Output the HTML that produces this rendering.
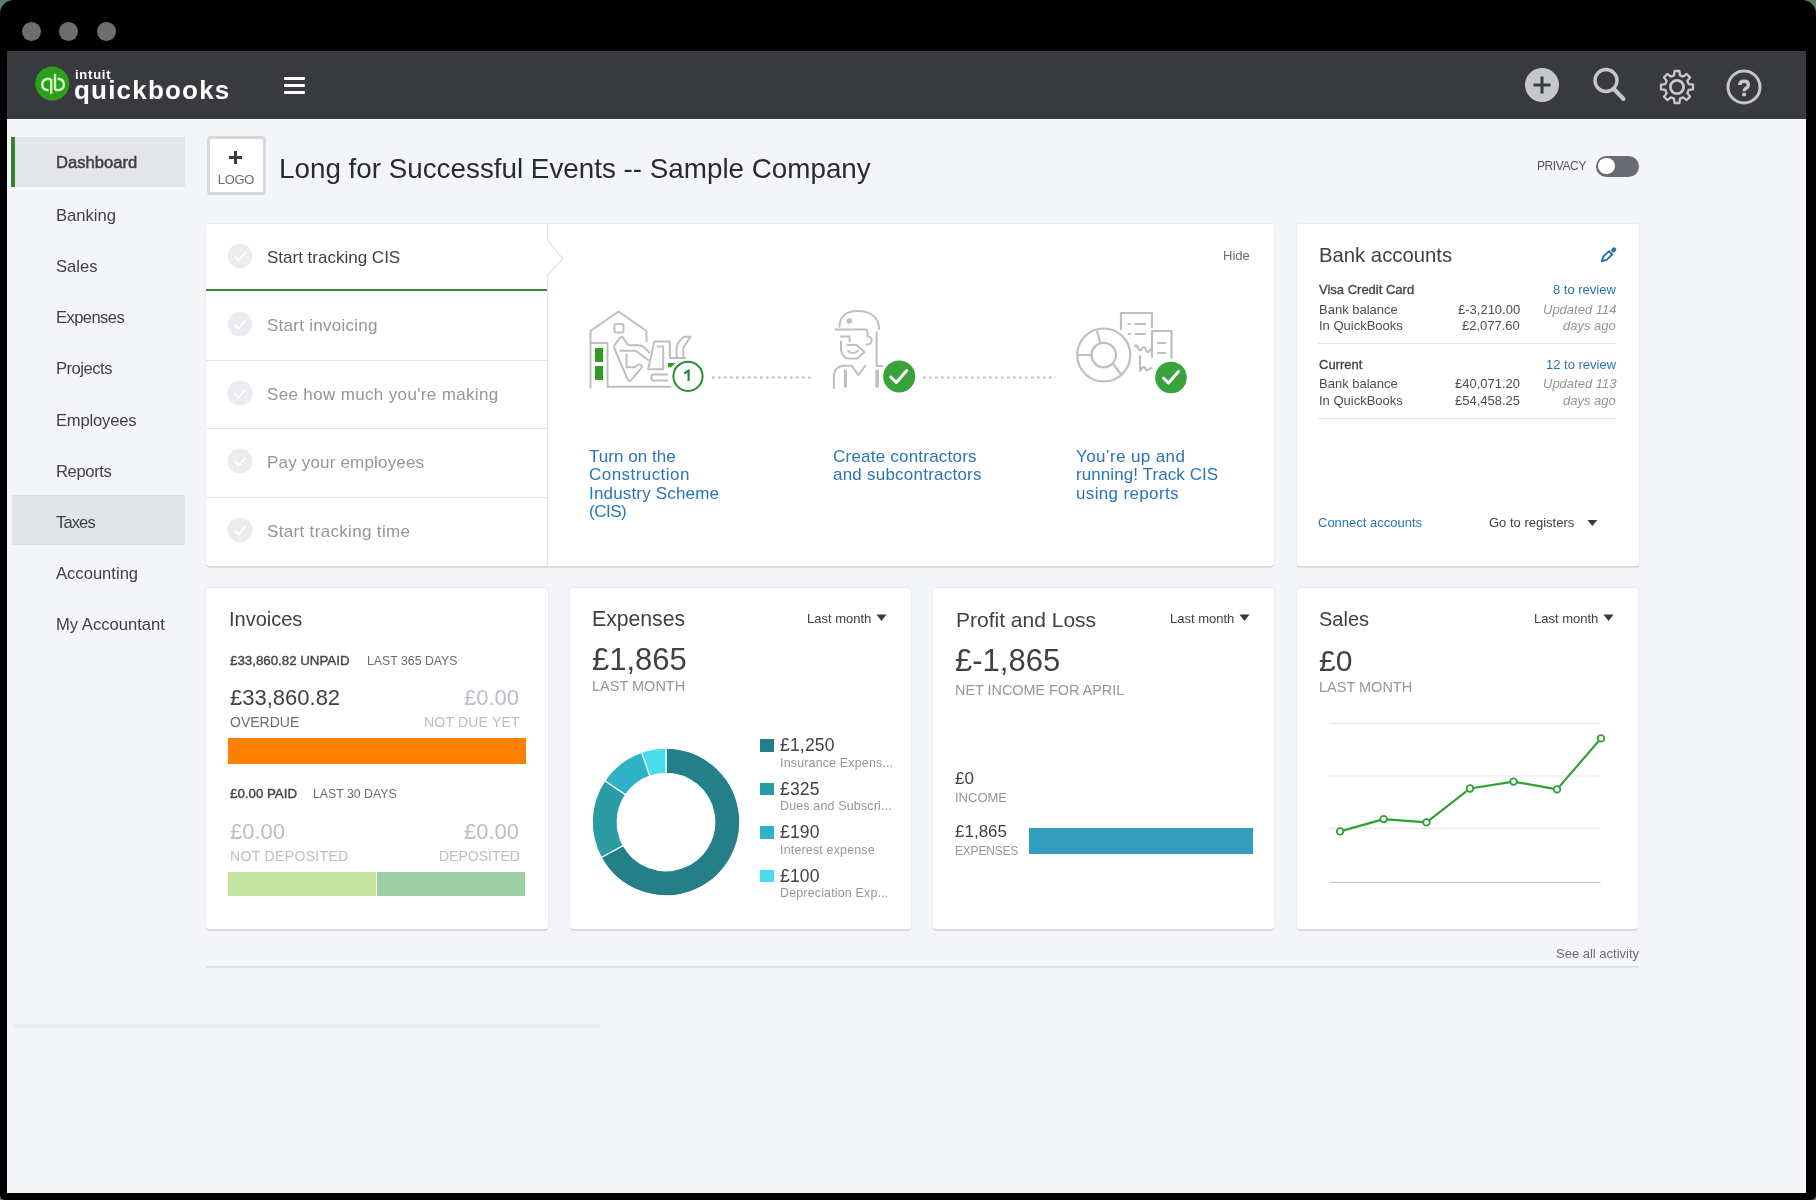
<!DOCTYPE html>
<html><head><meta charset="utf-8"><title>QuickBooks Dashboard</title>
<style>
html,body{margin:0;padding:0;width:1816px;height:1200px;overflow:hidden;background:#5b7f61;}
body{font-family:"Liberation Sans",sans-serif;position:relative;}
.t{position:absolute;white-space:nowrap;will-change:transform;}
.b{position:absolute;}
</style></head><body>
<div class="b" style="left:0px;top:0px;width:1816px;height:1200px;background:#000;border-radius:14px 14px 5px 5px"></div>
<div class="b" style="left:22.200000000000003px;top:22.200000000000003px;width:18.799999999999997px;height:18.799999999999997px;background:#6e6e6e;border-radius:50%"></div>
<div class="b" style="left:59.35px;top:22.200000000000003px;width:18.800000000000004px;height:18.799999999999997px;background:#6e6e6e;border-radius:50%"></div>
<div class="b" style="left:97.0px;top:22.200000000000003px;width:18.80000000000001px;height:18.799999999999997px;background:#6e6e6e;border-radius:50%"></div>
<div class="b" style="left:7px;top:51px;width:1799px;height:1142px;background:#f4f5f8"></div>
<div class="b" style="left:7px;top:51px;width:1799px;height:67.5px;background:#393a3e"></div>
<svg class="b" style="left:30px;top:62px;" width="44" height="44" viewBox="0 0 44 44"><circle cx="22.3" cy="21.6" r="17" fill="#2ca01c"/>
<g fill="none" stroke="#d4f2c4" stroke-width="2.4" stroke-linecap="butt">
<path d="M21.2,17 H16.8 A5.6,5.6 0 0 0 16.8,28 H18.6"/><path d="M21.2,17 V31.8"/>
<path d="M25,28 H29.3 A5.6,5.6 0 0 0 29.3,17 H27.6"/><path d="M25,11.8 V28"/>
</g></svg>
<div class="t" style="top:68.00px;font-size:13px;line-height:13px;color:#fff;font-weight:700;letter-spacing:0.75px;left:75px;">intuit</div>
<div class="t" style="top:77.00px;font-size:26px;line-height:26px;color:#fff;font-weight:700;letter-spacing:1.2px;left:74px;">quickbooks</div>
<div class="b" style="left:283.6px;top:76.5px;width:21.399999999999977px;height:3.0px;background:#fff;border-radius:1px"></div>
<div class="b" style="left:283.6px;top:83.5px;width:21.399999999999977px;height:3.0px;background:#fff;border-radius:1px"></div>
<div class="b" style="left:283.6px;top:90.5px;width:21.399999999999977px;height:3.0px;background:#fff;border-radius:1px"></div>
<svg class="b" style="left:1520px;top:63px;" width="44" height="44" viewBox="0 0 44 44"><circle cx="22" cy="22" r="17" fill="#c6c7ca"/>
<path d="M22,13.5 V30.5 M13.5,22 H30.5" stroke="#393a3e" stroke-width="3"/></svg>
<svg class="b" style="left:1585px;top:60px;" width="48" height="48" viewBox="0 0 48 48"><circle cx="21" cy="20.5" r="11" fill="none" stroke="#c6c7ca" stroke-width="3.4"/>
<path d="M29,29 L38.5,39" stroke="#c6c7ca" stroke-width="4" stroke-linecap="round"/></svg>
<svg class="b" style="left:1653px;top:63px;" width="48" height="48" viewBox="0 0 48 48"><path d="M35.63,21.03 L40.02,21.58 L40.02,26.42 L35.63,26.97 L34.32,30.12 L37.04,33.61 L33.61,37.04 L30.12,34.32 L26.97,35.63 L26.42,40.02 L21.58,40.02 L21.03,35.63 L17.88,34.32 L14.39,37.04 L10.96,33.61 L13.68,30.12 L12.37,26.97 L7.98,26.42 L7.98,21.58 L12.37,21.03 L13.68,17.88 L10.96,14.39 L14.39,10.96 L17.88,13.68 L21.03,12.37 L21.58,7.98 L26.42,7.98 L26.97,12.37 L30.12,13.68 L33.61,10.96 L37.04,14.39 L34.32,17.88Z" fill="none" stroke="#c6c7ca" stroke-width="2.3" stroke-linejoin="round"/>
<circle cx="24" cy="24" r="6.6" fill="none" stroke="#c6c7ca" stroke-width="2.8"/></svg>
<svg class="b" style="left:1720px;top:63px;" width="48" height="48" viewBox="0 0 48 48"><circle cx="24" cy="24" r="16" fill="none" stroke="#c6c7ca" stroke-width="3"/>
<path d="M19.8,22 C19.8,19 21.7,18.2 24.1,18.2 C26.8,18.2 28.4,19.8 28.4,21.9 C28.4,24.2 26.6,24.8 25.3,25.8 C24.4,26.5 24.1,27.1 24.1,28.3" fill="none" stroke="#c6c7ca" stroke-width="3.4"/><rect x="22.3" y="29.8" width="3.6" height="3.4" fill="#c6c7ca"/></svg>
<div class="b" style="left:11px;top:136.5px;width:174px;height:50.0px;background:#e3e5e8"></div>
<div class="b" style="left:11px;top:136.5px;width:4px;height:50.0px;background:#37842f"></div>
<div class="b" style="left:12px;top:495.3px;width:173px;height:50.19999999999999px;background:#e2e5e8"></div>
<div class="t" style="top:155.00px;font-size:16.6px;line-height:16.6px;color:#404145;-webkit-text-stroke:0.5px #404145;left:55.6px;">Dashboard</div>
<div class="t" style="top:208.00px;font-size:16.6px;line-height:16.6px;color:#404145;left:55.6px;">Banking</div>
<div class="t" style="top:259.00px;font-size:16.6px;line-height:16.6px;color:#404145;left:55.6px;">Sales</div>
<div class="t" style="top:310.00px;font-size:16.6px;line-height:16.6px;color:#404145;letter-spacing:-0.6px;left:55.6px;">Expenses</div>
<div class="t" style="top:361.00px;font-size:16.6px;line-height:16.6px;color:#404145;letter-spacing:-0.5px;left:55.6px;">Projects</div>
<div class="t" style="top:413.00px;font-size:16.6px;line-height:16.6px;color:#404145;letter-spacing:-0.2px;left:55.6px;">Employees</div>
<div class="t" style="top:464.00px;font-size:16.6px;line-height:16.6px;color:#404145;letter-spacing:-0.37px;left:55.6px;">Reports</div>
<div class="t" style="top:515.00px;font-size:16.6px;line-height:16.6px;color:#404145;letter-spacing:-0.9px;left:55.6px;">Taxes</div>
<div class="t" style="top:566.00px;font-size:16.6px;line-height:16.6px;color:#404145;left:55.6px;">Accounting</div>
<div class="t" style="top:617.00px;font-size:16.6px;line-height:16.6px;color:#404145;left:55.6px;">My Accountant</div>
<div class="b" style="left:206.7px;top:136.4px;width:58.900000000000034px;height:58.599999999999994px;background:#fff;border:3px solid #d6d8dc;border-radius:4px;box-sizing:border-box"></div>
<div class="b" style="left:229.2px;top:156.2px;width:12.800000000000011px;height:2.4000000000000057px;background:#393a3d"></div>
<div class="b" style="left:234.4px;top:151px;width:2.4000000000000057px;height:12.800000000000011px;background:#393a3d"></div>
<div class="t" style="top:173.00px;font-size:13px;line-height:13px;color:#6b6c72;letter-spacing:-0.3px;left:235.9px;transform:translateX(-50%);">LOGO</div>
<div class="t" style="top:155.00px;font-size:27.8px;line-height:27.8px;color:#2a2b2f;left:279px;">Long for Successful Events -- Sample Company</div>
<div class="t" style="top:160.00px;font-size:12px;line-height:12px;color:#55565b;letter-spacing:-0.4px;left:1536.6px;">PRIVACY</div>
<div class="b" style="left:1595.6px;top:155.7px;width:43.200000000000045px;height:20.900000000000006px;background:#6b6c72;border-radius:11px"></div>
<div class="b" style="left:1597.8px;top:157.9px;width:16.799999999999955px;height:16.5px;background:#fff;border-radius:50%"></div>
<div class="b" style="left:206px;top:223.5px;width:1067.5px;height:342.29999999999995px;background:#fff;box-shadow:0 1.8px 0 #d6d7db,0 0 0 1px rgba(0,0,0,.035);border-radius:3px"></div>
<div class="b" style="left:206px;top:359.5px;width:341px;height:1.0px;background:#e3e5e8"></div>
<div class="b" style="left:206px;top:427.9px;width:341px;height:1.0px;background:#e3e5e8"></div>
<div class="b" style="left:206px;top:496.5px;width:341px;height:1.0px;background:#e3e5e8"></div>
<div class="b" style="left:206px;top:288.8px;width:341px;height:2.3999999999999773px;background:#3f8a3a"></div>
<div class="b" style="left:546.5px;top:223.5px;width:1.0px;height:342.29999999999995px;background:#e3e5e8"></div>
<svg class="b" style="left:540px;top:236px;" width="30" height="44" viewBox="0 0 30 44"><path d="M7,3.6 L22.7,22.8 L7,39.7" fill="#fff" stroke="#dcdee1" stroke-width="1.2"/><rect x="0" y="0" width="6.4" height="44" fill="#fff"/></svg>
<svg class="b" style="left:227px;top:243px;" width="26" height="26" viewBox="0 0 26 26"><circle cx="13" cy="13" r="12.5" fill="#ebecef"/><path d="M7.5,13.5 L11.5,17.5 L18.5,9.5" fill="none" stroke="#fff" stroke-width="2"/></svg>
<div class="t" style="top:249.00px;font-size:17px;line-height:17px;color:#404145;left:267.4px;">Start tracking CIS</div>
<svg class="b" style="left:227px;top:311px;" width="26" height="26" viewBox="0 0 26 26"><circle cx="13" cy="13" r="12.5" fill="#ebecef"/><path d="M7.5,13.5 L11.5,17.5 L18.5,9.5" fill="none" stroke="#fff" stroke-width="2"/></svg>
<div class="t" style="top:317.00px;font-size:17px;line-height:17px;color:#93969b;letter-spacing:0.27px;left:267.4px;">Start invoicing</div>
<svg class="b" style="left:227px;top:380px;" width="26" height="26" viewBox="0 0 26 26"><circle cx="13" cy="13" r="12.5" fill="#ebecef"/><path d="M7.5,13.5 L11.5,17.5 L18.5,9.5" fill="none" stroke="#fff" stroke-width="2"/></svg>
<div class="t" style="top:386.00px;font-size:17px;line-height:17px;color:#93969b;letter-spacing:0.35px;left:267.4px;">See how much you're making</div>
<svg class="b" style="left:227px;top:448px;" width="26" height="26" viewBox="0 0 26 26"><circle cx="13" cy="13" r="12.5" fill="#ebecef"/><path d="M7.5,13.5 L11.5,17.5 L18.5,9.5" fill="none" stroke="#fff" stroke-width="2"/></svg>
<div class="t" style="top:454.00px;font-size:17px;line-height:17px;color:#93969b;letter-spacing:0.18px;left:267.4px;">Pay your employees</div>
<svg class="b" style="left:227px;top:517px;" width="26" height="26" viewBox="0 0 26 26"><circle cx="13" cy="13" r="12.5" fill="#ebecef"/><path d="M7.5,13.5 L11.5,17.5 L18.5,9.5" fill="none" stroke="#fff" stroke-width="2"/></svg>
<div class="t" style="top:523.00px;font-size:17px;line-height:17px;color:#93969b;letter-spacing:0.33px;left:267.4px;">Start tracking time</div>
<div class="t" style="top:249.00px;font-size:13px;line-height:13px;color:#6b6c72;right:566.5999999999999px;">Hide</div>
<svg class="b" style="left:700px;top:372px;" width="400" height="10" viewBox="0 0 400 10"><path d="M12,5.4 H111" stroke="#b9bcc1" stroke-width="2" stroke-dasharray="2.5,3.5"/><path d="M223,5.4 H355.5" stroke="#b9bcc1" stroke-width="2" stroke-dasharray="2.5,3.5"/></svg>
<svg class="b" style="left:580px;top:300px;" width="130" height="110" viewBox="0 0 130 110"><g fill="none" stroke="#bdbfc3" stroke-width="2" stroke-linejoin="round" stroke-linecap="round">
<path d="M10.5,87.5 V31 L38.5,11.5 L66.5,31 V41.5"/>
<rect x="34.5" y="24" width="9" height="8.5" rx="1.5"/>
<path d="M11,43 H27.5 V86.8 H90.5"/>
<path d="M46.5,54.3 V67.2 H55 L57.9,64.8 C60,63.8 62.8,65.8 61.5,67.8 L51,80.2 C50,81.4 48.6,81.3 47.9,80 L34.4,48.5 C33.8,47 34,45.8 35,44.3 L40,37.8 C41,36.6 42.4,36.6 43.2,37.8 L46.8,43.5 C47.5,44.8 48.5,45.3 50,45.3 H58.8 C60.5,45.3 62,46 63.5,47 L69.5,52.5"/>
<path d="M40.3,50.7 H55.8 L68.2,60"/>
<path d="M68.2,69.3 L74.4,41.4 H89.9 V57.9 H105.4"/>
<path d="M77.5,46.5 H83.2 V69.3 H68.2"/>
<path d="M96.6,57.9 V49 C96.6,45 99,41 103,37.5 C104,36.8 105,36.7 106,36.7 H110.6 L103.3,47.5 V57.9"/>
<path d="M87.3,74.4 H73.5 C72,74.4 71.3,75.5 71.3,77.5 C71.3,79.5 72,80.6 73.5,80.6 H87.3"/>
</g>
<rect x="15" y="48" width="8" height="14" fill="#2ca01c"/><rect x="15" y="66" width="8" height="14" fill="#2ca01c"/>
<path d="M87.9,63 H95.6 L91,67.2 H87.9Z" fill="#2ca01c"/>
<circle cx="108" cy="76.3" r="14.6" fill="#fff" stroke="#2a8a3a" stroke-width="2"/>
<path d="M104.3,73.6 L108.6,70.4 V81" fill="none" stroke="#2a8a3a" stroke-width="2.2" stroke-linejoin="round"/></svg>
<svg class="b" style="left:820px;top:300px;" width="100" height="100" viewBox="0 0 100 100"><g fill="none" stroke="#bdbfc3" stroke-width="2" stroke-linecap="round" stroke-linejoin="round">
<path d="M19.5,27 C19.5,16 27,11 38,11 C50,11 59,17 59,29"/>
<path d="M15.5,29.5 H45.5 C47,29.5 47.5,31 47.5,33 V36.5 C51,36.5 52,39 51.5,41 C51,43.5 49,44.5 46.7,44.5"/>
<path d="M21,36.5 H29.5 V41.5"/>
<path d="M21,41.5 V49 C21,53 24,58.5 28,58.5 H37 L44.5,52 L36.5,45 H27.5"/>
<path d="M28,50.7 C31,53.8 35,53.8 38,50.7"/>
<path d="M56.6,32 V66 H62.5"/>
<path d="M13.9,88 V76 C14,70 18,65.8 24,65.8 H31.7 L38.4,75 L45.1,66"/>
</g>
<circle cx="29.3" cy="21" r="2.8" fill="#bdbfc3"/>
<rect x="23.8" y="69.7" width="3.2" height="17.8" fill="#bdbfc3"/><rect x="55.4" y="69.7" width="3.6" height="17.8" fill="#bdbfc3"/>
<circle cx="79.2" cy="76.4" r="16" fill="#37a33a"/>
<path d="M70.8,77 L76.3,82.5 L86.8,70.5" fill="none" stroke="#fff" stroke-width="3" stroke-linecap="round" stroke-linejoin="round"/></svg>
<svg class="b" style="left:1060px;top:300px;" width="140" height="100" viewBox="0 0 140 100"><g fill="none" stroke="#bdbfc3" stroke-width="2.2" stroke-linecap="round" stroke-linejoin="round">
<circle cx="43.75" cy="55" r="26.5"/>
<circle cx="43.75" cy="55" r="12.2"/>
<path d="M37,31.5 L40.5,43 M17.5,55 H31.5 M53.5,64.5 L61.5,75"/>
<path d="M61,29 V13 H92 V27"/>
<path d="M92,57 V31 H111.5 V58"/>
<path d="M68.5,24 H70 M75.5,24 H85 M68.5,34 H70 M75.5,34 H85 M98,43 H105 M98,53 H105"/>
<path d="M75,46 C77,43 79,52 81,50 C83,46 85,46 86,50 C87,53 89,53 92,47"/>
<path d="M80,56 V71 C82,67 85,65 86,70 C87,71 89,69 91,68"/>
</g>
<circle cx="111" cy="77.5" r="15.8" fill="#37a33a"/>
<path d="M103.5,78 L108.5,83 L118.5,71.5" fill="none" stroke="#fff" stroke-width="3" stroke-linecap="round" stroke-linejoin="round"/></svg>
<div class="t" style="top:448.00px;font-size:17px;line-height:17px;color:#2a74ba;letter-spacing:0.05px;left:589.3px;">Turn on the</div>
<div class="t" style="top:466.00px;font-size:17px;line-height:17px;color:#2a74ba;letter-spacing:0.45px;left:589.3px;">Construction</div>
<div class="t" style="top:485.00px;font-size:17px;line-height:17px;color:#2a74ba;letter-spacing:0.17px;left:589.3px;">Industry Scheme</div>
<div class="t" style="top:503.00px;font-size:17px;line-height:17px;color:#2a74ba;letter-spacing:-0.5px;left:589.3px;">(CIS)</div>
<div class="t" style="top:448.00px;font-size:17px;line-height:17px;color:#2a74ba;letter-spacing:0.22px;left:833.2px;">Create contractors</div>
<div class="t" style="top:466.00px;font-size:17px;line-height:17px;color:#2a74ba;letter-spacing:0.23px;left:833.2px;">and subcontractors</div>
<div class="t" style="top:448.00px;font-size:17px;line-height:17px;color:#2a74ba;letter-spacing:0.38px;left:1075.5px;">You&#8217;re up and</div>
<div class="t" style="top:466.00px;font-size:17px;line-height:17px;color:#2a74ba;letter-spacing:0.08px;left:1075.5px;">running! Track CIS</div>
<div class="t" style="top:485.00px;font-size:17px;line-height:17px;color:#2a74ba;letter-spacing:0.35px;left:1075.5px;">using reports</div>
<div class="b" style="left:1296.5px;top:223.5px;width:342.0px;height:342.29999999999995px;background:#fff;box-shadow:0 1.8px 0 #d6d7db,0 0 0 1px rgba(0,0,0,.035);border-radius:3px"></div>
<div class="t" style="top:245.00px;font-size:20.3px;line-height:20.3px;color:#404145;left:1318.7px;">Bank accounts</div>
<svg class="b" style="left:1598px;top:244px;" width="22" height="22" viewBox="0 0 22 22"><path d="M3.7,17.25 L5.39,12.48 L10.98,7.17 L14.15,10.52 L8.56,15.82 Z" fill="none" stroke="#2d70ad" stroke-width="1.9" stroke-linejoin="round"/><path d="M15.26,6.29 L16.06,5.54" stroke="#2d70ad" stroke-width="4.4" stroke-linecap="round"/></svg>
<div class="t" style="top:283.00px;font-size:13px;line-height:13px;color:#45464b;-webkit-text-stroke:0.35px #45464b;left:1318.7px;">Visa Credit Card</div>
<div class="t" style="top:283.00px;font-size:13px;line-height:13px;color:#2a74ba;right:200px;">8 to review</div>
<div class="t" style="top:303.00px;font-size:13px;line-height:13px;color:#4d4e53;left:1318.7px;">Bank balance</div>
<div class="t" style="top:319.00px;font-size:13px;line-height:13px;color:#4d4e53;left:1318.7px;">In QuickBooks</div>
<div class="t" style="top:303.00px;font-size:13px;line-height:13px;color:#4d4e53;right:296px;">£-3,210.00</div>
<div class="t" style="top:319.00px;font-size:13px;line-height:13px;color:#4d4e53;right:296px;">£2,077.60</div>
<div class="t" style="top:303.00px;font-size:13px;line-height:13px;color:#93969b;font-style:italic;right:200px;">Updated 114</div>
<div class="t" style="top:319.00px;font-size:13px;line-height:13px;color:#93969b;font-style:italic;right:200px;">days ago</div>
<div class="b" style="left:1318px;top:343px;width:298px;height:1px;background:#e3e5e8"></div>
<div class="t" style="top:358.00px;font-size:13px;line-height:13px;color:#45464b;-webkit-text-stroke:0.35px #45464b;left:1318.7px;">Current</div>
<div class="t" style="top:358.00px;font-size:13px;line-height:13px;color:#2a74ba;right:200px;">12 to review</div>
<div class="t" style="top:377.00px;font-size:13px;line-height:13px;color:#4d4e53;left:1318.7px;">Bank balance</div>
<div class="t" style="top:394.00px;font-size:13px;line-height:13px;color:#4d4e53;left:1318.7px;">In QuickBooks</div>
<div class="t" style="top:377.00px;font-size:13px;line-height:13px;color:#4d4e53;right:296px;">£40,071.20</div>
<div class="t" style="top:394.00px;font-size:13px;line-height:13px;color:#4d4e53;right:296px;">£54,458.25</div>
<div class="t" style="top:377.00px;font-size:13px;line-height:13px;color:#93969b;font-style:italic;right:200px;">Updated 113</div>
<div class="t" style="top:394.00px;font-size:13px;line-height:13px;color:#93969b;font-style:italic;right:200px;">days ago</div>
<div class="b" style="left:1318px;top:417.7px;width:298px;height:1.0px;background:#e3e5e8"></div>
<div class="t" style="top:516.00px;font-size:13px;line-height:13px;color:#2a74ba;left:1318px;">Connect accounts</div>
<div class="t" style="top:516.00px;font-size:13px;line-height:13px;color:#404145;left:1489px;">Go to registers</div>
<svg class="b" style="left:1585px;top:518px;" width="14" height="10" viewBox="0 0 14 10"><path d="M2.4,2 H12.3 L7.35,8Z" fill="#393a3d"/></svg>
<div class="b" style="left:206px;top:587.5px;width:341.70000000000005px;height:341.29999999999995px;background:#fff;box-shadow:0 1.8px 0 #d6d7db,0 0 0 1px rgba(0,0,0,.035);border-radius:3px"></div>
<div class="b" style="left:569.6px;top:587.5px;width:341.69999999999993px;height:341.29999999999995px;background:#fff;box-shadow:0 1.8px 0 #d6d7db,0 0 0 1px rgba(0,0,0,.035);border-radius:3px"></div>
<div class="b" style="left:932.8px;top:587.5px;width:341.70000000000005px;height:341.29999999999995px;background:#fff;box-shadow:0 1.8px 0 #d6d7db,0 0 0 1px rgba(0,0,0,.035);border-radius:3px"></div>
<div class="b" style="left:1296.8px;top:587.5px;width:341.70000000000005px;height:341.29999999999995px;background:#fff;box-shadow:0 1.8px 0 #d6d7db,0 0 0 1px rgba(0,0,0,.035);border-radius:3px"></div>
<div class="t" style="top:609.00px;font-size:20px;line-height:20px;color:#404145;left:228.5px;">Invoices</div>
<div class="t" style="top:654.00px;font-size:13.3px;line-height:13.3px;color:#45464b;-webkit-text-stroke:0.4px #45464b;left:230px;">£33,860.82 UNPAID</div>
<div class="t" style="top:655.00px;font-size:12.3px;line-height:12.3px;color:#6b6c72;left:367px;">LAST 365 DAYS</div>
<div class="t" style="top:687.00px;font-size:22px;line-height:22px;color:#404145;left:230px;">£33,860.82</div>
<div class="t" style="top:687.00px;font-size:22px;line-height:22px;color:#babec5;right:1296.5px;">£0.00</div>
<div class="t" style="top:715.00px;font-size:14px;line-height:14px;color:#6b6c72;left:230px;">OVERDUE</div>
<div class="t" style="top:715.00px;font-size:14px;line-height:14px;color:#babec5;letter-spacing:0.2px;right:1296.5px;">NOT DUE YET</div>
<div class="b" style="left:228px;top:738px;width:297.5px;height:25.600000000000023px;background:#ff8000"></div>
<div class="t" style="top:787.00px;font-size:13.3px;line-height:13.3px;color:#45464b;-webkit-text-stroke:0.4px #45464b;left:230px;">£0.00 PAID</div>
<div class="t" style="top:788.00px;font-size:12.3px;line-height:12.3px;color:#6b6c72;left:313.4px;">LAST 30 DAYS</div>
<div class="t" style="top:821.00px;font-size:22px;line-height:22px;color:#babec5;left:230px;">£0.00</div>
<div class="t" style="top:821.00px;font-size:22px;line-height:22px;color:#babec5;right:1296.5px;">£0.00</div>
<div class="t" style="top:849.00px;font-size:14px;line-height:14px;color:#babec5;letter-spacing:0.35px;left:230px;">NOT DEPOSITED</div>
<div class="t" style="top:849.00px;font-size:14px;line-height:14px;color:#babec5;right:1296.5px;">DEPOSITED</div>
<div class="b" style="left:228px;top:871.6px;width:148px;height:24.899999999999977px;background:#c6e5a3"></div>
<div class="b" style="left:377px;top:871.6px;width:147.60000000000002px;height:24.899999999999977px;background:#9fcfa6"></div>
<div class="t" style="top:608.00px;font-size:21.2px;line-height:21.2px;color:#404145;left:592px;">Expenses</div>
<div class="t" style="top:612.00px;font-size:13px;line-height:13px;color:#404145;left:807.4px;">Last month</div>
<svg class="b" style="left:875.4px;top:613px;" width="14" height="10" viewBox="0 0 14 10"><path d="M1.5,1.5 H11.5 L6.5,8Z" fill="#393a3d"/></svg>
<div class="t" style="top:644.00px;font-size:31px;line-height:31px;color:#404145;left:592px;">£1,865</div>
<div class="t" style="top:679.00px;font-size:14.5px;line-height:14.5px;color:#93969b;left:592px;">LAST MONTH</div>
<svg class="b" style="left:585.5px;top:742.4px;" width="160" height="160" viewBox="0 0 160 160"><path d="M80.00,6.20 A73.8,73.8 0 1 1 15.27,115.46 L37.24,103.42 A48.75,48.75 0 1 0 80.00,31.25Z" fill="#247f88" stroke="#fff" stroke-width="1.2"/><path d="M15.27,115.46 A73.8,73.8 0 0 1 18.83,38.71 L39.59,52.72 A48.75,48.75 0 0 0 37.24,103.42Z" fill="#2a9ca4" stroke="#fff" stroke-width="1.2"/><path d="M18.83,38.71 A73.8,73.8 0 0 1 55.60,10.35 L63.89,33.99 A48.75,48.75 0 0 0 39.59,52.72Z" fill="#30b2c6" stroke="#fff" stroke-width="1.2"/><path d="M55.60,10.35 A73.8,73.8 0 0 1 80.00,6.20 L80.00,31.25 A48.75,48.75 0 0 0 63.89,33.99Z" fill="#48dbea" stroke="#fff" stroke-width="1.2"/></svg>
<div class="b" style="left:760px;top:739.0px;width:13.5px;height:12.5px;background:#247f88"></div>
<div class="t" style="top:737.00px;font-size:17.5px;line-height:17.5px;color:#404145;letter-spacing:0.2px;left:779.5px;">£1,250</div>
<div class="t" style="top:757.00px;font-size:12.4px;line-height:12.4px;color:#93969b;letter-spacing:0.2px;left:779.5px;">Insurance Expens...</div>
<div class="b" style="left:760px;top:782.5px;width:13.5px;height:12.5px;background:#2a9ca4"></div>
<div class="t" style="top:781.00px;font-size:17.5px;line-height:17.5px;color:#404145;letter-spacing:0.2px;left:779.5px;">£325</div>
<div class="t" style="top:800.00px;font-size:12.4px;line-height:12.4px;color:#93969b;letter-spacing:0.2px;left:779.5px;">Dues and Subscri...</div>
<div class="b" style="left:760px;top:826.0px;width:13.5px;height:12.5px;background:#30b2c6"></div>
<div class="t" style="top:824.00px;font-size:17.5px;line-height:17.5px;color:#404145;letter-spacing:0.2px;left:779.5px;">£190</div>
<div class="t" style="top:844.00px;font-size:12.4px;line-height:12.4px;color:#93969b;letter-spacing:0.2px;left:779.5px;">Interest expense</div>
<div class="b" style="left:760px;top:869.5px;width:13.5px;height:12.5px;background:#48dbea"></div>
<div class="t" style="top:868.00px;font-size:17.5px;line-height:17.5px;color:#404145;letter-spacing:0.2px;left:779.5px;">£100</div>
<div class="t" style="top:887.00px;font-size:12.4px;line-height:12.4px;color:#93969b;letter-spacing:0.2px;left:779.5px;">Depreciation Exp...</div>
<div class="t" style="top:609.00px;font-size:21px;line-height:21px;color:#404145;left:955.6px;">Profit and Loss</div>
<div class="t" style="top:612.00px;font-size:13px;line-height:13px;color:#404145;left:1170.4px;">Last month</div>
<svg class="b" style="left:1238.4px;top:613px;" width="14" height="10" viewBox="0 0 14 10"><path d="M1.5,1.5 H11.5 L6.5,8Z" fill="#393a3d"/></svg>
<div class="t" style="top:645.00px;font-size:31px;line-height:31px;color:#404145;left:955px;">£-1,865</div>
<div class="t" style="top:683.00px;font-size:14.4px;line-height:14.4px;color:#93969b;left:955px;">NET INCOME FOR APRIL</div>
<div class="t" style="top:770.00px;font-size:17px;line-height:17px;color:#404145;left:955px;">£0</div>
<div class="t" style="top:791.00px;font-size:13px;line-height:13px;color:#93969b;left:955px;">INCOME</div>
<div class="t" style="top:823.00px;font-size:17px;line-height:17px;color:#404145;left:955px;">£1,865</div>
<div class="t" style="top:845.00px;font-size:12px;line-height:12px;color:#93969b;letter-spacing:-0.2px;left:955px;">EXPENSES</div>
<div class="b" style="left:1029.4px;top:828.4px;width:223.5999999999999px;height:25.200000000000045px;background:#349dbd"></div>
<div class="t" style="top:609.00px;font-size:20px;line-height:20px;color:#404145;left:1318.5px;">Sales</div>
<div class="t" style="top:612.00px;font-size:13px;line-height:13px;color:#404145;left:1533.6px;">Last month</div>
<svg class="b" style="left:1601.6px;top:613px;" width="14" height="10" viewBox="0 0 14 10"><path d="M1.5,1.5 H11.5 L6.5,8Z" fill="#393a3d"/></svg>
<div class="t" style="top:646.00px;font-size:30px;line-height:30px;color:#404145;left:1318.5px;">£0</div>
<div class="t" style="top:680.00px;font-size:14.5px;line-height:14.5px;color:#93969b;left:1318.5px;">LAST MONTH</div>
<svg class="b" style="left:1300px;top:700px;" width="320" height="200" viewBox="0 0 320 200"><path d="M29,23.4 H300.5" stroke="#e6e7ea" stroke-width="1.2"/><path d="M29,76.0 H300.5" stroke="#e6e7ea" stroke-width="1.2"/><path d="M29,128.4 H300.5" stroke="#e6e7ea" stroke-width="1.2"/><path d="M29,182.4 H300.5" stroke="#c9cbcf" stroke-width="1.2"/><polyline points="40.09999999999991,131.39999999999998 83.59999999999991,119.10000000000002 126.5,122.39999999999998 170,88.5 213.5,81.60000000000002 257,89.39999999999998 301,38.39999999999998" fill="none" stroke="#30a032" stroke-width="2.2" stroke-linejoin="round"/><circle cx="40.09999999999991" cy="131.39999999999998" r="3.3" fill="#fff" stroke="#30a032" stroke-width="1.8"/><circle cx="83.59999999999991" cy="119.10000000000002" r="3.3" fill="#fff" stroke="#30a032" stroke-width="1.8"/><circle cx="126.5" cy="122.39999999999998" r="3.3" fill="#fff" stroke="#30a032" stroke-width="1.8"/><circle cx="170" cy="88.5" r="3.3" fill="#fff" stroke="#30a032" stroke-width="1.8"/><circle cx="213.5" cy="81.60000000000002" r="3.3" fill="#fff" stroke="#30a032" stroke-width="1.8"/><circle cx="257" cy="89.39999999999998" r="3.3" fill="#fff" stroke="#30a032" stroke-width="1.8"/><circle cx="301" cy="38.39999999999998" r="3.3" fill="#fff" stroke="#30a032" stroke-width="1.8"/></svg>
<div class="t" style="top:947.00px;font-size:13px;line-height:13px;color:#6b6c72;right:177.29999999999995px;">See all activity</div>
<div class="b" style="left:206px;top:966.2px;width:1432.6px;height:1.599999999999909px;background:#dfe1e5"></div>
<div class="b" style="left:13px;top:1023.8px;width:587px;height:4.0px;background:#ebecef;border-radius:2px"></div>
</body></html>
